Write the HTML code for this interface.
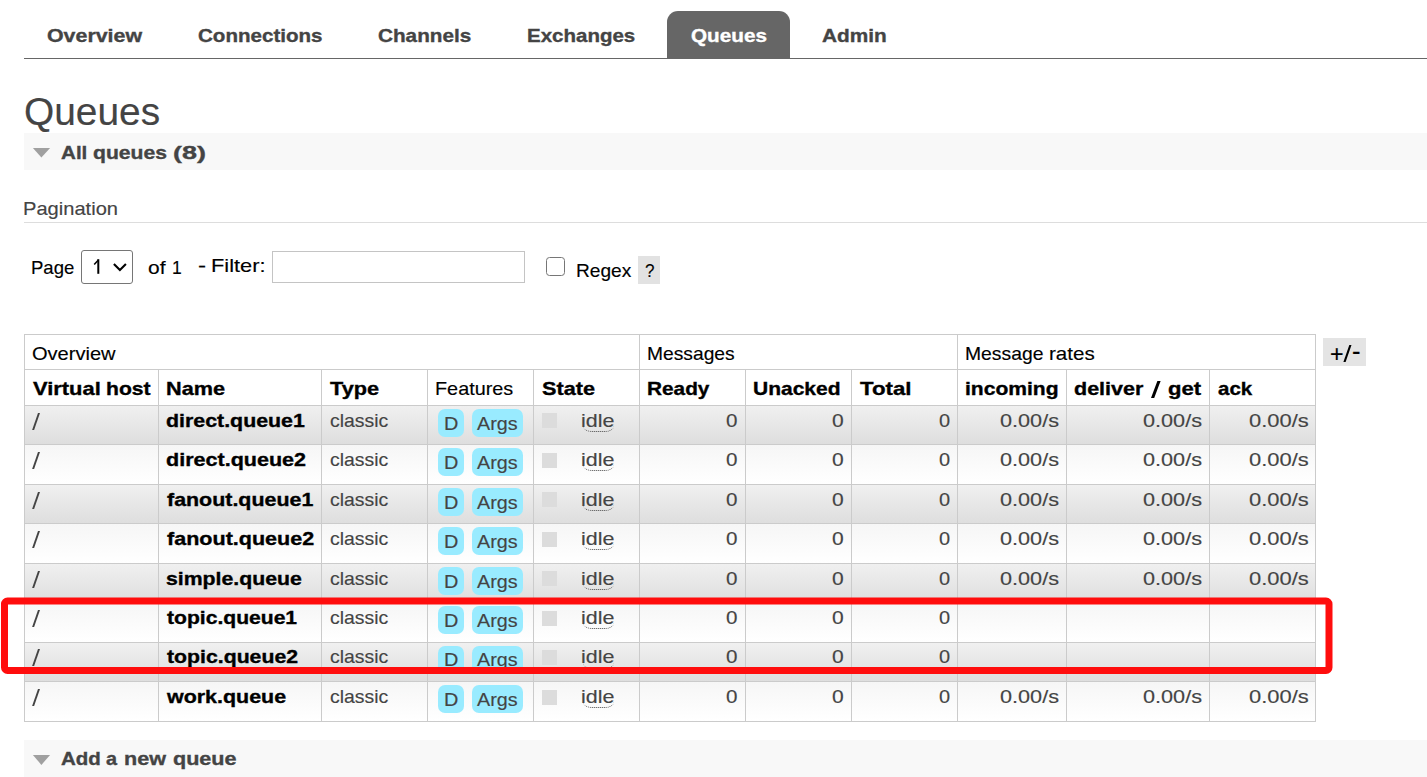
<!DOCTYPE html>
<html><head><meta charset="utf-8"><title>RabbitMQ Management - Queues</title>
<style>
html,body{margin:0;padding:0;background:#fff;}
body{width:1427px;height:777px;position:relative;overflow:hidden;font-family:"Liberation Sans",sans-serif;}
.t{position:absolute;white-space:pre;transform-origin:0 0;font-family:"Liberation Sans",sans-serif;}
</style></head><body>
<div style="position:absolute;left:24px;top:58px;width:1403px;height:1px;background:#666"></div>
<div style="position:absolute;left:667px;top:11px;width:123px;height:48px;background:#666;border-radius:11px 11px 0 0"></div>
<div style="position:absolute;left:24px;top:133px;width:1403px;height:37px;background:#f8f8f8"></div>
<svg style="position:absolute;left:32px;top:147px" width="20" height="12"><polygon points="0.9,0.9 18.1,0.9 9.4,10.4" fill="#a0a0a0"/></svg>
<div style="position:absolute;left:24px;top:222px;width:1403px;height:1px;background:#ddd"></div>
<div style="position:absolute;left:81px;top:250px;width:52px;height:34px;box-sizing:border-box;border:1px solid #767676;border-radius:3px;background:#fff"></div>
<svg style="position:absolute;left:112px;top:261px" width="16" height="12"><polyline points="1.9,2.9 7.9,8.9 13.9,2.9" fill="none" stroke="#000" stroke-width="2.1"/></svg>
<svg style="position:absolute;left:90px;top:256px" width="14" height="20"><rect x="7.3" y="3.2" width="2.0" height="14.6" fill="#000"/><line x1="4.2" y1="8.4" x2="8.4" y2="4.0" stroke="#000" stroke-width="1.5"/></svg>
<div style="position:absolute;left:272px;top:251px;width:253px;height:32px;box-sizing:border-box;border:1px solid #c4c4c4;background:#fff"></div>
<div style="position:absolute;left:546px;top:257px;width:19px;height:19.2px;box-sizing:border-box;border:1.6px solid #767676;border-radius:3.5px;background:#fff"></div>
<div style="position:absolute;left:638px;top:256px;width:22px;height:28px;background:#e2e2e2"></div>
<div style="position:absolute;left:25px;top:406px;width:1290px;height:38px;background:linear-gradient(#f0f0f0,#dedede)"></div>
<div style="position:absolute;left:25px;top:445px;width:1290px;height:39px;background:linear-gradient(#f6f6f6,#ffffff)"></div>
<div style="position:absolute;left:25px;top:485px;width:1290px;height:38px;background:linear-gradient(#f0f0f0,#dedede)"></div>
<div style="position:absolute;left:25px;top:524px;width:1290px;height:39px;background:linear-gradient(#f6f6f6,#ffffff)"></div>
<div style="position:absolute;left:25px;top:564px;width:1290px;height:38px;background:linear-gradient(#f0f0f0,#dedede)"></div>
<div style="position:absolute;left:25px;top:603px;width:1290px;height:39px;background:linear-gradient(#f6f6f6,#ffffff)"></div>
<div style="position:absolute;left:25px;top:643px;width:1290px;height:38px;background:linear-gradient(#f0f0f0,#dedede)"></div>
<div style="position:absolute;left:25px;top:682px;width:1290px;height:39px;background:linear-gradient(#f6f6f6,#ffffff)"></div>
<div style="position:absolute;left:24px;top:334px;width:1292px;height:1px;background:#cbcbcb"></div>
<div style="position:absolute;left:24px;top:369px;width:1292px;height:1px;background:#cbcbcb"></div>
<div style="position:absolute;left:24px;top:405px;width:1292px;height:1px;background:#cbcbcb"></div>
<div style="position:absolute;left:24px;top:444px;width:1292px;height:1px;background:#cbcbcb"></div>
<div style="position:absolute;left:24px;top:484px;width:1292px;height:1px;background:#cbcbcb"></div>
<div style="position:absolute;left:24px;top:523px;width:1292px;height:1px;background:#cbcbcb"></div>
<div style="position:absolute;left:24px;top:563px;width:1292px;height:1px;background:#cbcbcb"></div>
<div style="position:absolute;left:24px;top:602px;width:1292px;height:1px;background:#cbcbcb"></div>
<div style="position:absolute;left:24px;top:642px;width:1292px;height:1px;background:#cbcbcb"></div>
<div style="position:absolute;left:24px;top:681px;width:1292px;height:1px;background:#cbcbcb"></div>
<div style="position:absolute;left:24px;top:721px;width:1292px;height:1px;background:#cbcbcb"></div>
<div style="position:absolute;left:24px;top:334px;width:1px;height:388px;background:#cbcbcb"></div>
<div style="position:absolute;left:1315px;top:334px;width:1px;height:388px;background:#cbcbcb"></div>
<div style="position:absolute;left:639px;top:334px;width:1px;height:388px;background:#cbcbcb"></div>
<div style="position:absolute;left:957px;top:334px;width:1px;height:388px;background:#cbcbcb"></div>
<div style="position:absolute;left:158px;top:369px;width:1px;height:353px;background:#cbcbcb"></div>
<div style="position:absolute;left:321px;top:369px;width:1px;height:353px;background:#cbcbcb"></div>
<div style="position:absolute;left:427px;top:369px;width:1px;height:353px;background:#cbcbcb"></div>
<div style="position:absolute;left:533px;top:369px;width:1px;height:353px;background:#cbcbcb"></div>
<div style="position:absolute;left:745px;top:369px;width:1px;height:353px;background:#cbcbcb"></div>
<div style="position:absolute;left:851px;top:369px;width:1px;height:353px;background:#cbcbcb"></div>
<div style="position:absolute;left:1066px;top:369px;width:1px;height:353px;background:#cbcbcb"></div>
<div style="position:absolute;left:1209px;top:369px;width:1px;height:353px;background:#cbcbcb"></div>
<div style="position:absolute;left:438px;top:409px;width:26px;height:28px;background:#99ebff;border-radius:7px"></div>
<div style="position:absolute;left:471.5px;top:409px;width:51.5px;height:28px;background:#99ebff;border-radius:7px"></div>
<div style="position:absolute;left:542px;top:413px;width:15px;height:15px;background:#dcdcdc"></div>
<div style="position:absolute;left:582.5px;top:421px;width:31px;height:10px;border-bottom:1px dotted #444;border-radius:0 0 9px 9px / 0 0 6px 6px"></div>
<div style="position:absolute;left:438px;top:448px;width:26px;height:28px;background:#99ebff;border-radius:7px"></div>
<div style="position:absolute;left:471.5px;top:448px;width:51.5px;height:28px;background:#99ebff;border-radius:7px"></div>
<div style="position:absolute;left:542px;top:453px;width:15px;height:15px;background:#dcdcdc"></div>
<div style="position:absolute;left:582.5px;top:460px;width:31px;height:10px;border-bottom:1px dotted #444;border-radius:0 0 9px 9px / 0 0 6px 6px"></div>
<div style="position:absolute;left:438px;top:488px;width:26px;height:28px;background:#99ebff;border-radius:7px"></div>
<div style="position:absolute;left:471.5px;top:488px;width:51.5px;height:28px;background:#99ebff;border-radius:7px"></div>
<div style="position:absolute;left:542px;top:492px;width:15px;height:15px;background:#dcdcdc"></div>
<div style="position:absolute;left:582.5px;top:500px;width:31px;height:10px;border-bottom:1px dotted #444;border-radius:0 0 9px 9px / 0 0 6px 6px"></div>
<div style="position:absolute;left:438px;top:527px;width:26px;height:28px;background:#99ebff;border-radius:7px"></div>
<div style="position:absolute;left:471.5px;top:527px;width:51.5px;height:28px;background:#99ebff;border-radius:7px"></div>
<div style="position:absolute;left:542px;top:532px;width:15px;height:15px;background:#dcdcdc"></div>
<div style="position:absolute;left:582.5px;top:539px;width:31px;height:10px;border-bottom:1px dotted #444;border-radius:0 0 9px 9px / 0 0 6px 6px"></div>
<div style="position:absolute;left:438px;top:567px;width:26px;height:28px;background:#99ebff;border-radius:7px"></div>
<div style="position:absolute;left:471.5px;top:567px;width:51.5px;height:28px;background:#99ebff;border-radius:7px"></div>
<div style="position:absolute;left:542px;top:571px;width:15px;height:15px;background:#dcdcdc"></div>
<div style="position:absolute;left:582.5px;top:579px;width:31px;height:10px;border-bottom:1px dotted #444;border-radius:0 0 9px 9px / 0 0 6px 6px"></div>
<div style="position:absolute;left:438px;top:606px;width:26px;height:28px;background:#99ebff;border-radius:7px"></div>
<div style="position:absolute;left:471.5px;top:606px;width:51.5px;height:28px;background:#99ebff;border-radius:7px"></div>
<div style="position:absolute;left:542px;top:611px;width:15px;height:15px;background:#dcdcdc"></div>
<div style="position:absolute;left:582.5px;top:618px;width:31px;height:10px;border-bottom:1px dotted #444;border-radius:0 0 9px 9px / 0 0 6px 6px"></div>
<div style="position:absolute;left:438px;top:646px;width:26px;height:28px;background:#99ebff;border-radius:7px"></div>
<div style="position:absolute;left:471.5px;top:646px;width:51.5px;height:28px;background:#99ebff;border-radius:7px"></div>
<div style="position:absolute;left:542px;top:650px;width:15px;height:15px;background:#dcdcdc"></div>
<div style="position:absolute;left:582.5px;top:658px;width:31px;height:10px;border-bottom:1px dotted #444;border-radius:0 0 9px 9px / 0 0 6px 6px"></div>
<div style="position:absolute;left:438px;top:685px;width:26px;height:28px;background:#99ebff;border-radius:7px"></div>
<div style="position:absolute;left:471.5px;top:685px;width:51.5px;height:28px;background:#99ebff;border-radius:7px"></div>
<div style="position:absolute;left:542px;top:690px;width:15px;height:15px;background:#dcdcdc"></div>
<div style="position:absolute;left:582.5px;top:697px;width:31px;height:10px;border-bottom:1px dotted #444;border-radius:0 0 9px 9px / 0 0 6px 6px"></div>
<div style="position:absolute;left:1323px;top:338px;width:43px;height:28px;background:#e4e4e4"></div>
<div style="position:absolute;left:24px;top:740px;width:1403px;height:37px;background:#f8f8f8"></div>
<svg style="position:absolute;left:32px;top:754px" width="20" height="12"><polygon points="0.9,0.9 18.1,0.9 9.4,10.9" fill="#a0a0a0"/></svg>
<svg style="position:absolute;left:0;top:0" width="1427" height="777"><polygon points="1343.4,361.9 1345.6,361.9 1351.5,344.9 1349.3,344.9" fill="#000"/><polygon points="1151,397.9 1154.2,397.9 1160.6,381 1157.4,381" fill="#000"/><polygon points="32.1,430 34.1,430 40,413 38,413" fill="#444"/><polygon points="32.1,469 34.1,469 40,452 38,452" fill="#444"/><polygon points="32.1,509 34.1,509 40,492 38,492" fill="#444"/><polygon points="32.1,548 34.1,548 40,531 38,531" fill="#444"/><polygon points="32.1,588 34.1,588 40,571 38,571" fill="#444"/><polygon points="32.1,627 34.1,627 40,610 38,610" fill="#444"/><polygon points="32.1,666 34.1,666 40,649 38,649" fill="#444"/><polygon points="32.1,706 34.1,706 40,689 38,689" fill="#444"/></svg>
<span class="t" style="left:46.96px;top:26.00px;font-size:19px;line-height:19px;font-weight:bold;-webkit-text-stroke:0.35px currentColor;color:#444;transform:scaleX(1.1248)">Overview</span>
<span class="t" style="left:198.49px;top:26.00px;font-size:19px;line-height:19px;font-weight:bold;-webkit-text-stroke:0.35px currentColor;color:#444;transform:scaleX(1.0819)">Connections</span>
<span class="t" style="left:378.08px;top:26.00px;font-size:19px;line-height:19px;font-weight:bold;-webkit-text-stroke:0.35px currentColor;color:#444;transform:scaleX(1.0905)">Channels</span>
<span class="t" style="left:526.65px;top:26.00px;font-size:19px;line-height:19px;font-weight:bold;-webkit-text-stroke:0.35px currentColor;color:#444;transform:scaleX(1.0789)">Exchanges</span>
<span class="t" style="left:690.68px;top:26.00px;font-size:19px;line-height:19px;font-weight:bold;-webkit-text-stroke:0.35px currentColor;color:#fff;transform:scaleX(1.0892)">Queues</span>
<span class="t" style="left:822.45px;top:26.00px;font-size:19px;line-height:19px;font-weight:bold;-webkit-text-stroke:0.35px currentColor;color:#444;transform:scaleX(1.0957)">Admin</span>
<span class="t" style="left:23.81px;top:93.00px;font-size:38px;line-height:38px;-webkit-text-stroke:0.15px currentColor;color:#444;transform:scaleX(1.0231)">Queues</span>
<span class="t" style="left:61.46px;top:142.70px;font-size:19px;line-height:19px;font-weight:bold;-webkit-text-stroke:0.35px currentColor;color:#444;transform:scaleX(1.0844)">All</span>
<span class="t" style="left:92.87px;top:142.70px;font-size:19px;line-height:19px;font-weight:bold;-webkit-text-stroke:0.35px currentColor;color:#444;transform:scaleX(1.1123)">queues</span>
<span class="t" style="left:172.56px;top:142.70px;font-size:19px;line-height:19px;font-weight:bold;-webkit-text-stroke:0.35px currentColor;color:#444;transform:scaleX(1.4175)">(8)</span>
<span class="t" style="left:23.01px;top:199.00px;font-size:19px;line-height:19px;-webkit-text-stroke:0.15px currentColor;color:#444;transform:scaleX(1.0582)">Pagination</span>
<span class="t" style="left:31.14px;top:258.00px;font-size:19px;line-height:19px;-webkit-text-stroke:0.15px currentColor;color:#000;transform:scaleX(0.9762)">Page</span>
<span class="t" style="left:147.77px;top:258.00px;font-size:19px;line-height:19px;-webkit-text-stroke:0.15px currentColor;color:#000;transform:scaleX(1.1041)">of</span>
<span class="t" style="left:172.13px;top:258.00px;font-size:19px;line-height:19px;-webkit-text-stroke:0.15px currentColor;color:#000;transform:scaleX(0.9212)">1</span>
<span class="t" style="left:197.78px;top:256.00px;font-size:19px;line-height:19px;-webkit-text-stroke:0.15px currentColor;color:#000;transform:scaleX(1.2757)">-</span>
<span class="t" style="left:211.38px;top:256.00px;font-size:19px;line-height:19px;-webkit-text-stroke:0.15px currentColor;color:#000;transform:scaleX(1.1458)">Filter:</span>
<span class="t" style="left:576.09px;top:260.50px;font-size:19px;line-height:19px;-webkit-text-stroke:0.15px currentColor;color:#000;transform:scaleX(1.0066)">Regex</span>
<span class="t" style="left:645.03px;top:261.00px;font-size:19px;line-height:19px;-webkit-text-stroke:0.15px currentColor;color:#000;transform:scaleX(0.8986)">?</span>
<span class="t" style="left:32.08px;top:344.00px;font-size:19px;line-height:19px;-webkit-text-stroke:0.15px currentColor;color:#000;transform:scaleX(1.0552)">Overview</span>
<span class="t" style="left:647.08px;top:344.00px;font-size:19px;line-height:19px;-webkit-text-stroke:0.15px currentColor;color:#000;transform:scaleX(1.0121)">Messages</span>
<span class="t" style="left:965.37px;top:344.00px;font-size:19px;line-height:19px;-webkit-text-stroke:0.15px currentColor;color:#000;transform:scaleX(1.0167)">Message</span>
<span class="t" style="left:1048.95px;top:344.00px;font-size:19px;line-height:19px;-webkit-text-stroke:0.15px currentColor;color:#000;transform:scaleX(1.0824)">rates</span>
<span class="t" style="left:32.86px;top:379.00px;font-size:19px;line-height:19px;font-weight:bold;-webkit-text-stroke:0.35px currentColor;color:#000;transform:scaleX(1.1521)">Virtual</span>
<span class="t" style="left:105.77px;top:379.00px;font-size:19px;line-height:19px;font-weight:bold;-webkit-text-stroke:0.35px currentColor;color:#000;transform:scaleX(1.1117)">host</span>
<span class="t" style="left:166.27px;top:379.00px;font-size:19px;line-height:19px;font-weight:bold;-webkit-text-stroke:0.35px currentColor;color:#000;transform:scaleX(1.1409)">Name</span>
<span class="t" style="left:329.81px;top:379.00px;font-size:19px;line-height:19px;font-weight:bold;-webkit-text-stroke:0.35px currentColor;color:#000;transform:scaleX(1.1405)">Type</span>
<span class="t" style="left:435.14px;top:379.00px;font-size:19px;line-height:19px;-webkit-text-stroke:0.15px currentColor;color:#000;transform:scaleX(1.0433)">Features</span>
<span class="t" style="left:542.03px;top:379.00px;font-size:19px;line-height:19px;font-weight:bold;-webkit-text-stroke:0.35px currentColor;color:#000;transform:scaleX(1.1394)">State</span>
<span class="t" style="left:647.23px;top:379.00px;font-size:19px;line-height:19px;font-weight:bold;-webkit-text-stroke:0.35px currentColor;color:#000;transform:scaleX(1.0948)">Ready</span>
<span class="t" style="left:753.36px;top:379.00px;font-size:19px;line-height:19px;font-weight:bold;-webkit-text-stroke:0.35px currentColor;color:#000;transform:scaleX(1.1057)">Unacked</span>
<span class="t" style="left:859.91px;top:379.00px;font-size:19px;line-height:19px;font-weight:bold;-webkit-text-stroke:0.35px currentColor;color:#000;transform:scaleX(1.1705)">Total</span>
<span class="t" style="left:965.28px;top:379.00px;font-size:19px;line-height:19px;font-weight:bold;-webkit-text-stroke:0.35px currentColor;color:#000;transform:scaleX(1.1083)">incoming</span>
<span class="t" style="left:1074.05px;top:379.00px;font-size:19px;line-height:19px;font-weight:bold;-webkit-text-stroke:0.35px currentColor;color:#000;transform:scaleX(1.1320)">deliver</span>
<span class="t" style="left:1168.23px;top:379.00px;font-size:19px;line-height:19px;font-weight:bold;-webkit-text-stroke:0.35px currentColor;color:#000;transform:scaleX(1.1600)">get</span>
<span class="t" style="left:1217.56px;top:379.00px;font-size:19px;line-height:19px;font-weight:bold;-webkit-text-stroke:0.35px currentColor;color:#000;transform:scaleX(1.0795)">ack</span>
<span class="t" style="left:1329.83px;top:341.71px;font-size:19px;line-height:19px;-webkit-text-stroke:0.15px currentColor;color:#000;transform:scale(1.2216,1.2587)">+</span>
<span class="t" style="left:1351.83px;top:337.82px;font-size:19px;line-height:19px;-webkit-text-stroke:0.15px currentColor;color:#000;transform:scale(1.3405,1.4000)">-</span>
<span class="t" style="left:61.16px;top:749.00px;font-size:19px;line-height:19px;font-weight:bold;-webkit-text-stroke:0.35px currentColor;color:#444;transform:scaleX(1.0790)">Add</span>
<span class="t" style="left:106.38px;top:749.00px;font-size:19px;line-height:19px;font-weight:bold;-webkit-text-stroke:0.35px currentColor;color:#444;transform:scaleX(1.0439)">a</span>
<span class="t" style="left:124.18px;top:749.00px;font-size:19px;line-height:19px;font-weight:bold;-webkit-text-stroke:0.35px currentColor;color:#444;transform:scaleX(1.1357)">new</span>
<span class="t" style="left:172.65px;top:749.00px;font-size:19px;line-height:19px;font-weight:bold;-webkit-text-stroke:0.35px currentColor;color:#444;transform:scaleX(1.1358)">queue</span>
<span class="t" style="left:166.36px;top:411.00px;font-size:19px;line-height:19px;font-weight:bold;-webkit-text-stroke:0.35px currentColor;color:#000;transform:scaleX(1.1239)">direct.queue1</span>
<span class="t" style="left:330.03px;top:411.00px;font-size:19px;line-height:19px;-webkit-text-stroke:0.15px currentColor;color:#444;transform:scaleX(1.0206)">classic</span>
<span class="t" style="left:443.53px;top:413.50px;font-size:19px;line-height:19px;-webkit-text-stroke:0.15px currentColor;color:#444;transform:scaleX(1.0462)">D</span>
<span class="t" style="left:476.87px;top:413.50px;font-size:19px;line-height:19px;-webkit-text-stroke:0.15px currentColor;color:#444;transform:scaleX(1.0379)">Args</span>
<span class="t" style="left:581.19px;top:411.00px;font-size:19px;line-height:19px;-webkit-text-stroke:0.15px currentColor;color:#444;transform:scaleX(1.1309)">idle</span>
<span class="t" style="left:726.19px;top:411.00px;font-size:19px;line-height:19px;-webkit-text-stroke:0.15px currentColor;color:#444;transform:scaleX(1.0849)">0</span>
<span class="t" style="left:832.07px;top:411.00px;font-size:19px;line-height:19px;-webkit-text-stroke:0.15px currentColor;color:#444;transform:scaleX(1.1068)">0</span>
<span class="t" style="left:938.61px;top:411.00px;font-size:19px;line-height:19px;-webkit-text-stroke:0.15px currentColor;color:#444;transform:scaleX(1.0521)">0</span>
<span class="t" style="left:999.75px;top:411.00px;font-size:19px;line-height:19px;-webkit-text-stroke:0.15px currentColor;color:#444;transform:scaleX(1.1395)">0.00/s</span>
<span class="t" style="left:1142.65px;top:411.00px;font-size:19px;line-height:19px;-webkit-text-stroke:0.15px currentColor;color:#444;transform:scaleX(1.1395)">0.00/s</span>
<span class="t" style="left:1248.53px;top:411.00px;font-size:19px;line-height:19px;-webkit-text-stroke:0.15px currentColor;color:#444;transform:scaleX(1.1533)">0.00/s</span>
<span class="t" style="left:166.35px;top:450.00px;font-size:19px;line-height:19px;font-weight:bold;-webkit-text-stroke:0.35px currentColor;color:#000;transform:scaleX(1.1336)">direct.queue2</span>
<span class="t" style="left:330.03px;top:450.00px;font-size:19px;line-height:19px;-webkit-text-stroke:0.15px currentColor;color:#444;transform:scaleX(1.0206)">classic</span>
<span class="t" style="left:443.53px;top:452.50px;font-size:19px;line-height:19px;-webkit-text-stroke:0.15px currentColor;color:#444;transform:scaleX(1.0462)">D</span>
<span class="t" style="left:476.87px;top:452.50px;font-size:19px;line-height:19px;-webkit-text-stroke:0.15px currentColor;color:#444;transform:scaleX(1.0379)">Args</span>
<span class="t" style="left:581.19px;top:450.00px;font-size:19px;line-height:19px;-webkit-text-stroke:0.15px currentColor;color:#444;transform:scaleX(1.1309)">idle</span>
<span class="t" style="left:726.19px;top:450.00px;font-size:19px;line-height:19px;-webkit-text-stroke:0.15px currentColor;color:#444;transform:scaleX(1.0849)">0</span>
<span class="t" style="left:832.07px;top:450.00px;font-size:19px;line-height:19px;-webkit-text-stroke:0.15px currentColor;color:#444;transform:scaleX(1.1068)">0</span>
<span class="t" style="left:938.61px;top:450.00px;font-size:19px;line-height:19px;-webkit-text-stroke:0.15px currentColor;color:#444;transform:scaleX(1.0521)">0</span>
<span class="t" style="left:999.75px;top:450.00px;font-size:19px;line-height:19px;-webkit-text-stroke:0.15px currentColor;color:#444;transform:scaleX(1.1395)">0.00/s</span>
<span class="t" style="left:1142.65px;top:450.00px;font-size:19px;line-height:19px;-webkit-text-stroke:0.15px currentColor;color:#444;transform:scaleX(1.1395)">0.00/s</span>
<span class="t" style="left:1248.53px;top:450.00px;font-size:19px;line-height:19px;-webkit-text-stroke:0.15px currentColor;color:#444;transform:scaleX(1.1533)">0.00/s</span>
<span class="t" style="left:166.92px;top:490.00px;font-size:19px;line-height:19px;font-weight:bold;-webkit-text-stroke:0.35px currentColor;color:#000;transform:scaleX(1.1268)">fanout.queue1</span>
<span class="t" style="left:330.03px;top:490.00px;font-size:19px;line-height:19px;-webkit-text-stroke:0.15px currentColor;color:#444;transform:scaleX(1.0206)">classic</span>
<span class="t" style="left:443.53px;top:492.50px;font-size:19px;line-height:19px;-webkit-text-stroke:0.15px currentColor;color:#444;transform:scaleX(1.0462)">D</span>
<span class="t" style="left:476.87px;top:492.50px;font-size:19px;line-height:19px;-webkit-text-stroke:0.15px currentColor;color:#444;transform:scaleX(1.0379)">Args</span>
<span class="t" style="left:581.19px;top:490.00px;font-size:19px;line-height:19px;-webkit-text-stroke:0.15px currentColor;color:#444;transform:scaleX(1.1309)">idle</span>
<span class="t" style="left:726.19px;top:490.00px;font-size:19px;line-height:19px;-webkit-text-stroke:0.15px currentColor;color:#444;transform:scaleX(1.0849)">0</span>
<span class="t" style="left:832.07px;top:490.00px;font-size:19px;line-height:19px;-webkit-text-stroke:0.15px currentColor;color:#444;transform:scaleX(1.1068)">0</span>
<span class="t" style="left:938.61px;top:490.00px;font-size:19px;line-height:19px;-webkit-text-stroke:0.15px currentColor;color:#444;transform:scaleX(1.0521)">0</span>
<span class="t" style="left:999.75px;top:490.00px;font-size:19px;line-height:19px;-webkit-text-stroke:0.15px currentColor;color:#444;transform:scaleX(1.1395)">0.00/s</span>
<span class="t" style="left:1142.65px;top:490.00px;font-size:19px;line-height:19px;-webkit-text-stroke:0.15px currentColor;color:#444;transform:scaleX(1.1395)">0.00/s</span>
<span class="t" style="left:1248.53px;top:490.00px;font-size:19px;line-height:19px;-webkit-text-stroke:0.15px currentColor;color:#444;transform:scaleX(1.1533)">0.00/s</span>
<span class="t" style="left:166.92px;top:529.00px;font-size:19px;line-height:19px;font-weight:bold;-webkit-text-stroke:0.35px currentColor;color:#000;transform:scaleX(1.1337)">fanout.queue2</span>
<span class="t" style="left:330.03px;top:529.00px;font-size:19px;line-height:19px;-webkit-text-stroke:0.15px currentColor;color:#444;transform:scaleX(1.0206)">classic</span>
<span class="t" style="left:443.53px;top:531.50px;font-size:19px;line-height:19px;-webkit-text-stroke:0.15px currentColor;color:#444;transform:scaleX(1.0462)">D</span>
<span class="t" style="left:476.87px;top:531.50px;font-size:19px;line-height:19px;-webkit-text-stroke:0.15px currentColor;color:#444;transform:scaleX(1.0379)">Args</span>
<span class="t" style="left:581.19px;top:529.00px;font-size:19px;line-height:19px;-webkit-text-stroke:0.15px currentColor;color:#444;transform:scaleX(1.1309)">idle</span>
<span class="t" style="left:726.19px;top:529.00px;font-size:19px;line-height:19px;-webkit-text-stroke:0.15px currentColor;color:#444;transform:scaleX(1.0849)">0</span>
<span class="t" style="left:832.07px;top:529.00px;font-size:19px;line-height:19px;-webkit-text-stroke:0.15px currentColor;color:#444;transform:scaleX(1.1068)">0</span>
<span class="t" style="left:938.61px;top:529.00px;font-size:19px;line-height:19px;-webkit-text-stroke:0.15px currentColor;color:#444;transform:scaleX(1.0521)">0</span>
<span class="t" style="left:999.75px;top:529.00px;font-size:19px;line-height:19px;-webkit-text-stroke:0.15px currentColor;color:#444;transform:scaleX(1.1395)">0.00/s</span>
<span class="t" style="left:1142.65px;top:529.00px;font-size:19px;line-height:19px;-webkit-text-stroke:0.15px currentColor;color:#444;transform:scaleX(1.1395)">0.00/s</span>
<span class="t" style="left:1248.53px;top:529.00px;font-size:19px;line-height:19px;-webkit-text-stroke:0.15px currentColor;color:#444;transform:scaleX(1.1533)">0.00/s</span>
<span class="t" style="left:166.36px;top:569.00px;font-size:19px;line-height:19px;font-weight:bold;-webkit-text-stroke:0.35px currentColor;color:#000;transform:scaleX(1.1183)">simple.queue</span>
<span class="t" style="left:330.03px;top:569.00px;font-size:19px;line-height:19px;-webkit-text-stroke:0.15px currentColor;color:#444;transform:scaleX(1.0206)">classic</span>
<span class="t" style="left:443.53px;top:571.50px;font-size:19px;line-height:19px;-webkit-text-stroke:0.15px currentColor;color:#444;transform:scaleX(1.0462)">D</span>
<span class="t" style="left:476.87px;top:571.50px;font-size:19px;line-height:19px;-webkit-text-stroke:0.15px currentColor;color:#444;transform:scaleX(1.0379)">Args</span>
<span class="t" style="left:581.19px;top:569.00px;font-size:19px;line-height:19px;-webkit-text-stroke:0.15px currentColor;color:#444;transform:scaleX(1.1309)">idle</span>
<span class="t" style="left:726.19px;top:569.00px;font-size:19px;line-height:19px;-webkit-text-stroke:0.15px currentColor;color:#444;transform:scaleX(1.0849)">0</span>
<span class="t" style="left:832.07px;top:569.00px;font-size:19px;line-height:19px;-webkit-text-stroke:0.15px currentColor;color:#444;transform:scaleX(1.1068)">0</span>
<span class="t" style="left:938.61px;top:569.00px;font-size:19px;line-height:19px;-webkit-text-stroke:0.15px currentColor;color:#444;transform:scaleX(1.0521)">0</span>
<span class="t" style="left:999.75px;top:569.00px;font-size:19px;line-height:19px;-webkit-text-stroke:0.15px currentColor;color:#444;transform:scaleX(1.1395)">0.00/s</span>
<span class="t" style="left:1142.65px;top:569.00px;font-size:19px;line-height:19px;-webkit-text-stroke:0.15px currentColor;color:#444;transform:scaleX(1.1395)">0.00/s</span>
<span class="t" style="left:1248.53px;top:569.00px;font-size:19px;line-height:19px;-webkit-text-stroke:0.15px currentColor;color:#444;transform:scaleX(1.1533)">0.00/s</span>
<span class="t" style="left:166.92px;top:608.00px;font-size:19px;line-height:19px;font-weight:bold;-webkit-text-stroke:0.35px currentColor;color:#000;transform:scaleX(1.1102)">topic.queue1</span>
<span class="t" style="left:330.03px;top:608.00px;font-size:19px;line-height:19px;-webkit-text-stroke:0.15px currentColor;color:#444;transform:scaleX(1.0206)">classic</span>
<span class="t" style="left:443.53px;top:610.50px;font-size:19px;line-height:19px;-webkit-text-stroke:0.15px currentColor;color:#444;transform:scaleX(1.0462)">D</span>
<span class="t" style="left:476.87px;top:610.50px;font-size:19px;line-height:19px;-webkit-text-stroke:0.15px currentColor;color:#444;transform:scaleX(1.0379)">Args</span>
<span class="t" style="left:581.19px;top:608.00px;font-size:19px;line-height:19px;-webkit-text-stroke:0.15px currentColor;color:#444;transform:scaleX(1.1309)">idle</span>
<span class="t" style="left:726.19px;top:608.00px;font-size:19px;line-height:19px;-webkit-text-stroke:0.15px currentColor;color:#444;transform:scaleX(1.0849)">0</span>
<span class="t" style="left:832.07px;top:608.00px;font-size:19px;line-height:19px;-webkit-text-stroke:0.15px currentColor;color:#444;transform:scaleX(1.1068)">0</span>
<span class="t" style="left:938.61px;top:608.00px;font-size:19px;line-height:19px;-webkit-text-stroke:0.15px currentColor;color:#444;transform:scaleX(1.0521)">0</span>
<span class="t" style="left:166.92px;top:647.00px;font-size:19px;line-height:19px;font-weight:bold;-webkit-text-stroke:0.35px currentColor;color:#000;transform:scaleX(1.1183)">topic.queue2</span>
<span class="t" style="left:330.03px;top:647.00px;font-size:19px;line-height:19px;-webkit-text-stroke:0.15px currentColor;color:#444;transform:scaleX(1.0206)">classic</span>
<span class="t" style="left:443.53px;top:649.50px;font-size:19px;line-height:19px;-webkit-text-stroke:0.15px currentColor;color:#444;transform:scaleX(1.0462)">D</span>
<span class="t" style="left:476.87px;top:649.50px;font-size:19px;line-height:19px;-webkit-text-stroke:0.15px currentColor;color:#444;transform:scaleX(1.0379)">Args</span>
<span class="t" style="left:581.19px;top:647.00px;font-size:19px;line-height:19px;-webkit-text-stroke:0.15px currentColor;color:#444;transform:scaleX(1.1309)">idle</span>
<span class="t" style="left:726.19px;top:647.00px;font-size:19px;line-height:19px;-webkit-text-stroke:0.15px currentColor;color:#444;transform:scaleX(1.0849)">0</span>
<span class="t" style="left:832.07px;top:647.00px;font-size:19px;line-height:19px;-webkit-text-stroke:0.15px currentColor;color:#444;transform:scaleX(1.1068)">0</span>
<span class="t" style="left:938.61px;top:647.00px;font-size:19px;line-height:19px;-webkit-text-stroke:0.15px currentColor;color:#444;transform:scaleX(1.0521)">0</span>
<span class="t" style="left:167.20px;top:687.00px;font-size:19px;line-height:19px;font-weight:bold;-webkit-text-stroke:0.35px currentColor;color:#000;transform:scaleX(1.1280)">work.queue</span>
<span class="t" style="left:330.03px;top:687.00px;font-size:19px;line-height:19px;-webkit-text-stroke:0.15px currentColor;color:#444;transform:scaleX(1.0206)">classic</span>
<span class="t" style="left:443.53px;top:689.50px;font-size:19px;line-height:19px;-webkit-text-stroke:0.15px currentColor;color:#444;transform:scaleX(1.0462)">D</span>
<span class="t" style="left:476.87px;top:689.50px;font-size:19px;line-height:19px;-webkit-text-stroke:0.15px currentColor;color:#444;transform:scaleX(1.0379)">Args</span>
<span class="t" style="left:581.19px;top:687.00px;font-size:19px;line-height:19px;-webkit-text-stroke:0.15px currentColor;color:#444;transform:scaleX(1.1309)">idle</span>
<span class="t" style="left:726.19px;top:687.00px;font-size:19px;line-height:19px;-webkit-text-stroke:0.15px currentColor;color:#444;transform:scaleX(1.0849)">0</span>
<span class="t" style="left:832.07px;top:687.00px;font-size:19px;line-height:19px;-webkit-text-stroke:0.15px currentColor;color:#444;transform:scaleX(1.1068)">0</span>
<span class="t" style="left:938.61px;top:687.00px;font-size:19px;line-height:19px;-webkit-text-stroke:0.15px currentColor;color:#444;transform:scaleX(1.0521)">0</span>
<span class="t" style="left:999.75px;top:687.00px;font-size:19px;line-height:19px;-webkit-text-stroke:0.15px currentColor;color:#444;transform:scaleX(1.1395)">0.00/s</span>
<span class="t" style="left:1142.65px;top:687.00px;font-size:19px;line-height:19px;-webkit-text-stroke:0.15px currentColor;color:#444;transform:scaleX(1.1395)">0.00/s</span>
<span class="t" style="left:1248.53px;top:687.00px;font-size:19px;line-height:19px;-webkit-text-stroke:0.15px currentColor;color:#444;transform:scaleX(1.1533)">0.00/s</span>
<svg style="position:absolute;left:0;top:0" width="1427" height="777"><rect x="4.5" y="601" width="1324.5" height="69.5" rx="3" ry="3" fill="none" stroke="#ff0d0d" stroke-width="7"/></svg>
</body></html>
